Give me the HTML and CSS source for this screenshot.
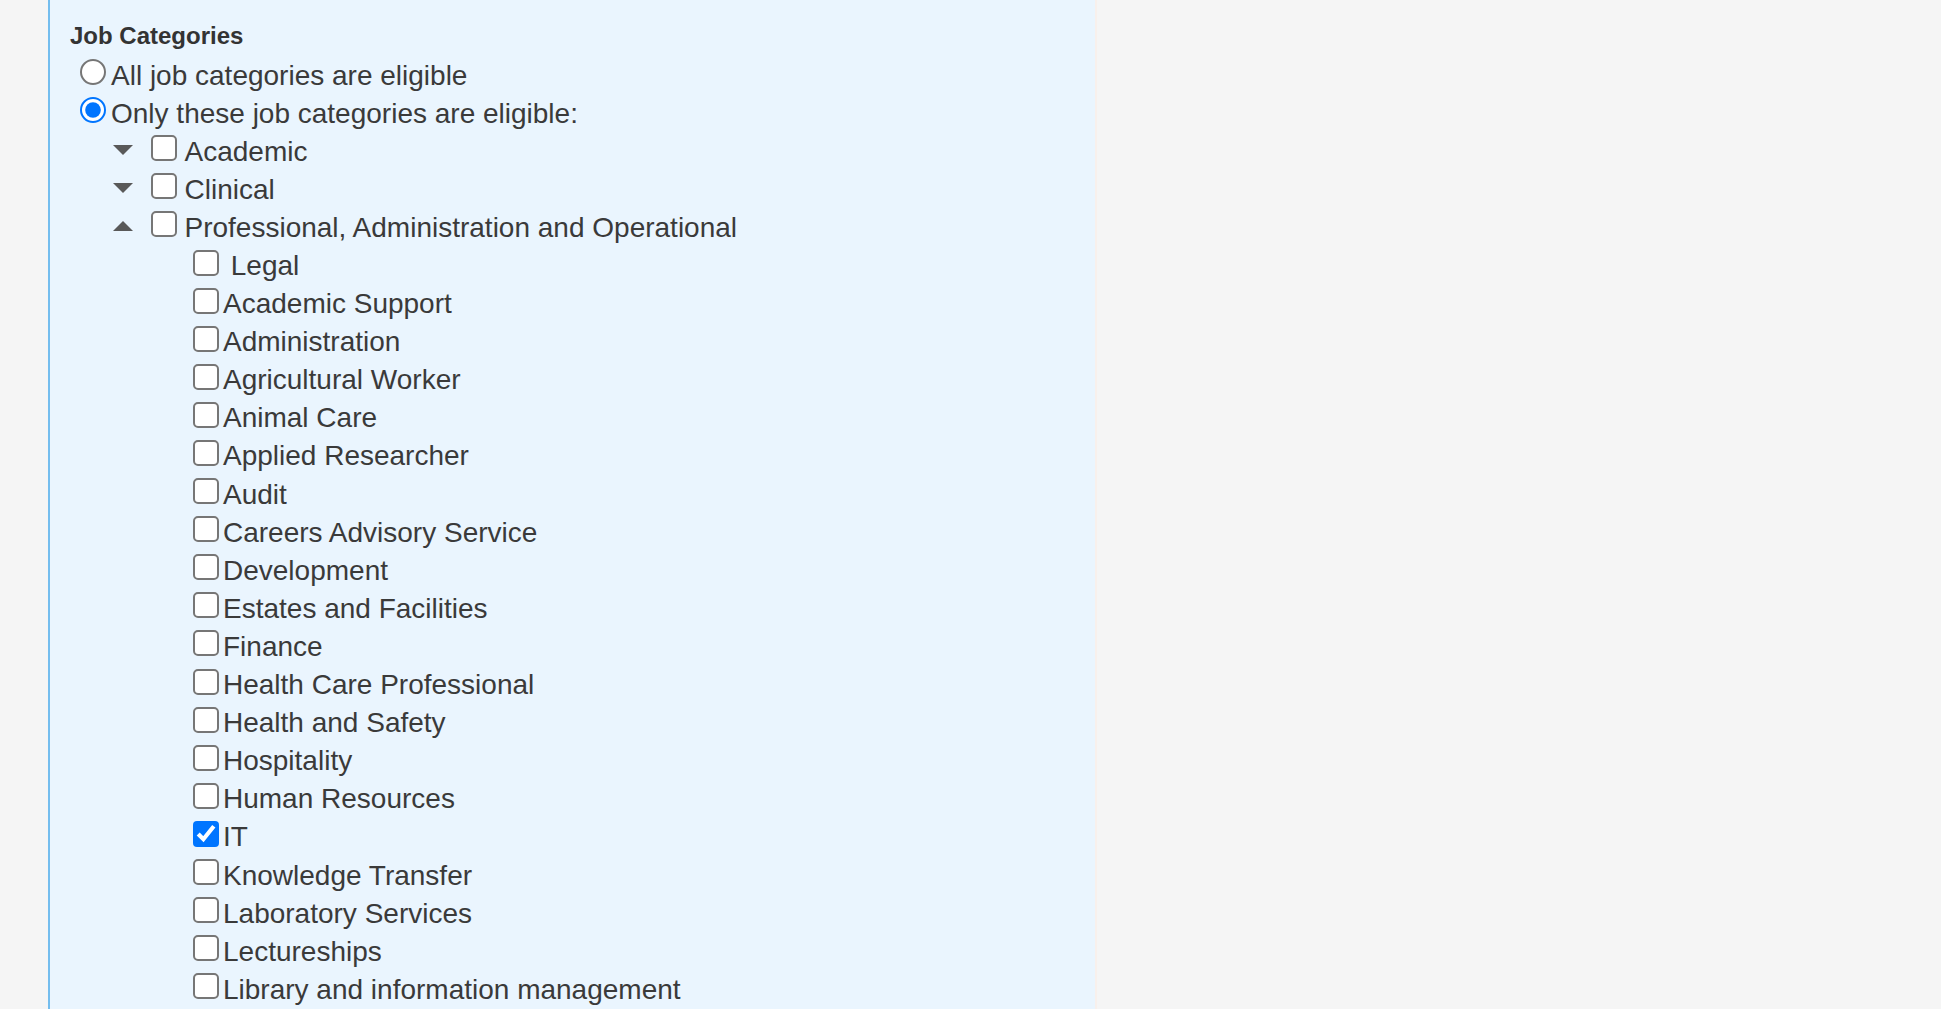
FILE: index.html
```html
<!DOCTYPE html>
<html lang="en">
<head>
<meta charset="utf-8">
<title>Job Categories</title>
<link rel="stylesheet" href="styles.css">
</head>
<body>
<div class="page">
  <section class="panel">
    <h3 class="heading">Job Categories</h3>
    <div class="choices">
      <label class="row choice"><input class="radio" type="radio" name="eligible"><span class="text">All job categories are eligible</span></label>
      <label class="row choice"><input class="radio" type="radio" name="eligible" checked><span class="text">Only these job categories are eligible:</span></label>
    </div>
    <ul class="tree">
      <li>
        <div class="row parent">
          <svg class="toggle" width="20" height="10" viewBox="0 0 20 10"><path d="M0 0 H20 L10 10 Z"/></svg>
          <input class="check" type="checkbox"><span class="text ptext">Academic</span>
        </div>
      </li>
      <li>
        <div class="row parent">
          <svg class="toggle" width="20" height="10" viewBox="0 0 20 10"><path d="M0 0 H20 L10 10 Z"/></svg>
          <input class="check" type="checkbox"><span class="text ptext">Clinical</span>
        </div>
      </li>
      <li>
        <div class="row parent">
          <svg class="toggle" width="20" height="10" viewBox="0 0 20 10"><path d="M0 10 H20 L10 0 Z"/></svg>
          <input class="check" type="checkbox"><span class="text ptext">Professional, Administration and Operational</span>
        </div>
        <ul class="children">
          <li class="row"><input class="check" type="checkbox"><span class="text ctext">&nbsp;Legal</span></li>
          <li class="row"><input class="check" type="checkbox"><span class="text ctext">Academic Support</span></li>
          <li class="row"><input class="check" type="checkbox"><span class="text ctext">Administration</span></li>
          <li class="row"><input class="check" type="checkbox"><span class="text ctext">Agricultural Worker</span></li>
          <li class="row"><input class="check" type="checkbox"><span class="text ctext">Animal Care</span></li>
          <li class="row"><input class="check" type="checkbox"><span class="text ctext">Applied Researcher</span></li>
          <li class="row"><input class="check" type="checkbox"><span class="text ctext">Audit</span></li>
          <li class="row"><input class="check" type="checkbox"><span class="text ctext">Careers Advisory Service</span></li>
          <li class="row"><input class="check" type="checkbox"><span class="text ctext">Development</span></li>
          <li class="row"><input class="check" type="checkbox"><span class="text ctext">Estates and Facilities</span></li>
          <li class="row"><input class="check" type="checkbox"><span class="text ctext">Finance</span></li>
          <li class="row"><input class="check" type="checkbox"><span class="text ctext">Health Care Professional</span></li>
          <li class="row"><input class="check" type="checkbox"><span class="text ctext">Health and Safety</span></li>
          <li class="row"><input class="check" type="checkbox"><span class="text ctext">Hospitality</span></li>
          <li class="row"><input class="check" type="checkbox"><span class="text ctext">Human Resources</span></li>
          <li class="row"><input class="check" type="checkbox" checked><span class="text ctext">IT</span></li>
          <li class="row"><input class="check" type="checkbox"><span class="text ctext">Knowledge Transfer</span></li>
          <li class="row"><input class="check" type="checkbox"><span class="text ctext">Laboratory Services</span></li>
          <li class="row"><input class="check" type="checkbox"><span class="text ctext">Lectureships</span></li>
          <li class="row"><input class="check" type="checkbox"><span class="text ctext">Library and information management</span></li>
        </ul>
      </li>
    </ul>
  </section>
</div>
</body>
</html>
```
FILE: styles.css
```css
html, body {
  margin: 0;
  padding: 0;
  background: #f5f5f5;
  overflow: hidden;
}
body {
  font-family: "Liberation Sans", Arial, sans-serif;
  color: #3a3a3a;
}
.page {
  padding-left: 48px;
  height: 1009px;
}
.panel {
  width: 1049px;
  height: 100%;
  box-sizing: border-box;
  background: #eaf5fe;
  border-left: 2px solid #74bdee;
  border-right: 2px solid #f8f0ec;
  padding: 22px 0 0 20px;
}
.heading {
  margin: 0 0 3px;
  font-size: 24px;
  line-height: 28px;
  font-weight: bold;
  color: #333333;
}
.row {
  display: flex;
  align-items: center;
  height: 38.1px;
  font-size: 28px;
  line-height: 32px;
  white-space: nowrap;
}
.text {
  margin-top: 7px;
}
.radio, .check {
  zoom: 2;
  margin: 0;
  flex: none;
}
.choice {
  padding-left: 10px;
}
.choice .text {
  margin-left: 5px;
}
.tree, .children {
  list-style: none;
  margin: 0;
}
.tree {
  padding: 0 0 0 43px;
}
.toggle {
  display: block;
  flex: none;
  fill: #595959;
  margin: 3px 17.5px 0 0;
}
.ptext {
  margin-left: 8px;
}
.children {
  padding: 0 0 0 79.5px;
}
.ctext {
  margin-left: 4.5px;
}
```
